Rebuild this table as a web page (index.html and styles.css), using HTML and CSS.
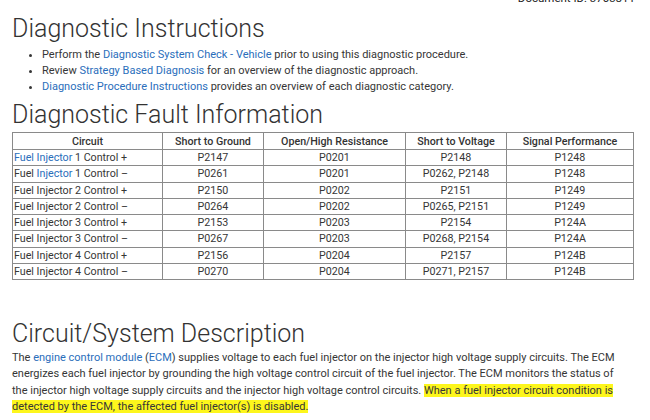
FILE: index.html
```html
<!DOCTYPE html>
<html>
<head>
<meta charset="utf-8">
<link rel="stylesheet" href="styles.css">
</head>
<body>
<div class="page">
  <div class="docid">Document ID: 3703811</div>
  <h1 class="h1 first">Diagnostic Instructions</h1>
  <ul class="bullets">
    <li>Perform the <a>Diagnostic System Check - Vehicle</a> prior to using this diagnostic procedure.</li>
    <li>Review <a>Strategy Based Diagnosis</a> for an overview of the diagnostic approach.</li>
    <li><a>Diagnostic Procedure Instructions</a> provides an overview of each diagnostic category.</li>
  </ul>
  <h1 class="h1 second">Diagnostic Fault Information</h1>
  <table class="faults">
    <colgroup>
      <col class="c1"><col class="c2"><col class="c3"><col class="c4"><col class="c5">
    </colgroup>
    <thead>
      <tr><th>Circuit</th><th>Short to Ground</th><th>Open/High Resistance</th><th>Short to Voltage</th><th>Signal Performance</th></tr>
    </thead>
    <tbody>
      <tr><td class="name"><a>Fuel Injector</a> 1 Control +</td><td>P2147</td><td>P0201</td><td>P2148</td><td>P1248</td></tr>
      <tr><td class="name">Fuel <a>Injector</a> 1 Control –</td><td>P0261</td><td>P0201</td><td>P0262, P2148</td><td>P1248</td></tr>
      <tr><td class="name">Fuel Injector 2 Control +</td><td>P2150</td><td>P0202</td><td>P2151</td><td>P1249</td></tr>
      <tr><td class="name">Fuel Injector 2 Control –</td><td>P0264</td><td>P0202</td><td>P0265, P2151</td><td>P1249</td></tr>
      <tr><td class="name">Fuel Injector 3 Control +</td><td>P2153</td><td>P0203</td><td>P2154</td><td>P124A</td></tr>
      <tr><td class="name">Fuel Injector 3 Control –</td><td>P0267</td><td>P0203</td><td>P0268, P2154</td><td>P124A</td></tr>
      <tr><td class="name">Fuel Injector 4 Control +</td><td>P2156</td><td>P0204</td><td>P2157</td><td>P124B</td></tr>
      <tr><td class="name">Fuel Injector 4 Control –</td><td>P0270</td><td>P0204</td><td>P0271, P2157</td><td>P124B</td></tr>
    </tbody>
  </table>
  <h1 class="h1 third">Circuit/System Description</h1>
  <p class="desc">The <a>engine control module</a> (<a>ECM</a>) supplies voltage to each fuel injector on the injector high voltage supply circuits. The ECM energizes each fuel injector by grounding the high voltage control circuit of the fuel injector. The ECM monitors the status of the injector high voltage supply circuits and the injector high voltage control circuits. <mark class="hl">When a fuel injector circuit condition is detected by the ECM, the affected fuel injector(s) is disabled.</mark></p>
</div>
</body>
</html>
```
FILE: styles.css
```css
html, body {
  margin: 0;
  padding: 0;
  background: #ffffff;
}
body {
  font-family: Roboto, "Liberation Sans", sans-serif;
  color: #363636;
  width: 650px;
  height: 420px;
  overflow: hidden;
}
.page {
  position: relative;
  padding: 0 18px 0 12px;
}
a {
  color: #2a6ebb;
  text-decoration: none;
}
.docid {
  position: absolute;
  right: 15px;
  top: -9px;
  font-size: 11.5px;
  line-height: 14px;
  color: #222;
}
.h1 {
  margin: 0;
  font-weight: 300;
  font-size: 25px;
  line-height: 30px;
  color: #333;
}
.h1.first {
  padding-top: 14px;
}
.h1.second {
  margin-top: 5px;
}
.bullets {
  margin: 3px 0 0 0;
  padding-left: 30px;
  font-size: 11px;
  line-height: 16px;
}
.faults {
  border-collapse: collapse;
  width: 621px;
  margin-top: 2px;
  font-size: 10.7px;
  table-layout: fixed;
}
.faults col.c1 { width: 150px; }
.faults col.c2 { width: 101px; }
.faults col.c3 { width: 142px; }
.faults col.c4 { width: 101px; }
.faults col.c5 { width: 127px; }
.faults th, .faults td {
  border: 1px solid #8a8a8a;
  height: 15.25px;
  padding: 0 1px;
  text-align: center;
  line-height: 15px;
  white-space: nowrap;
}
.faults th {
  font-weight: 500;
  height: 16px;
  color: #333;
}
.faults td.name {
  text-align: left;
}
.h1.third {
  margin-top: 39px;
  margin-bottom: 1px;
}
.desc {
  margin: 0;
  font-size: 11px;
  line-height: 16.3px;
  padding-right: 6px;
}
.hl {
  background: #fdf61c;
  color: #363636;
}
```
